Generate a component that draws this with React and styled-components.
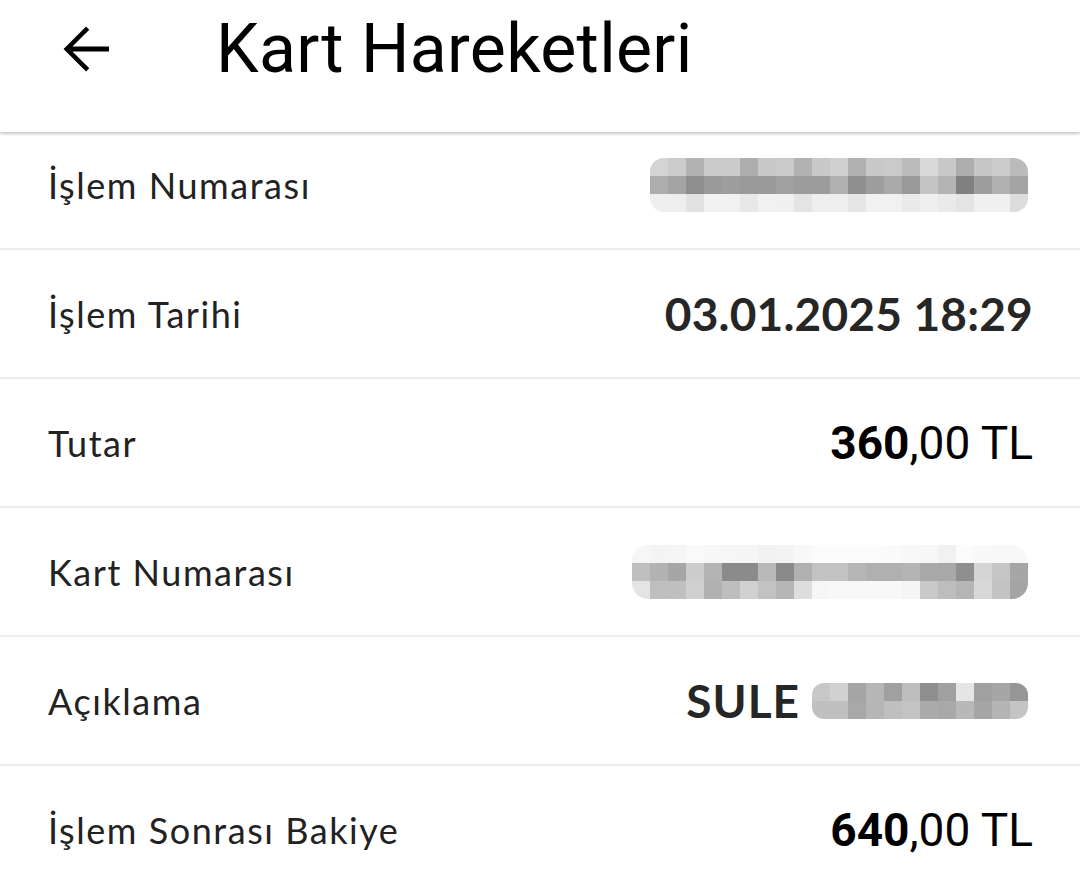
import styled, { createGlobalStyle } from "styled-components";

const GlobalStyle = createGlobalStyle`
  html, body {
    margin: 0;
    padding: 0;
    background: #ffffff;
  }
  body {
    font-family: Lato, "Noto Sans", sans-serif;
    color: #222222;
    overflow: hidden;
  }
`;

const Page = styled.div`
  width: 1080px;
  height: 891px;
  background: #ffffff;
  overflow: hidden;
`;

// üst bar
const Header = styled.header`
  position: sticky;
  top: 0;
  z-index: 2;
  height: 132px;
  display: flex;
  align-items: center;
  background: #ffffff;
  box-shadow: 0 2px 3px rgba(0, 0, 0, 0.22);
  padding-bottom: 34px;
  box-sizing: border-box;
`;

const BackButton = styled.button`
  width: 72px;
  height: 72px;
  margin-left: 49px;
  padding: 0;
  border: 0;
  background: transparent;
  display: flex;
  align-items: center;
  justify-content: center;
  cursor: pointer;
`;

const Title = styled.h1`
  margin: 0 0 0 95px;
  font-family: Roboto, "Noto Sans", sans-serif;
  font-weight: 400;
  font-size: 68px;
  letter-spacing: 0.3px;
  color: #000000;
  line-height: 1;
`;

// detay listesi
const List = styled.div`
  margin-top: -11px;
`;

const Row = styled.div`
  height: 127px;
  border-bottom: 2px solid #ededed;
  display: flex;
  align-items: center;
  justify-content: space-between;
  padding: 0 47px 0 48px;
`;

const Label = styled.span`
  font-family: Lato, "Noto Sans", sans-serif;
  font-size: 36px;
  font-weight: 400;
  color: #222222;
  letter-spacing: 1.55px;
`;

const DateValue = styled.span`
  font-family: Lato, "Noto Sans", sans-serif;
  font-size: 46px;
  font-weight: 700;
  color: #262626;
  letter-spacing: 0.2px;
`;

const Amount = styled.span`
  font-family: Roboto, "Noto Sans", sans-serif;
  font-size: 46px;
  color: #000000;
  font-weight: 400;

  b {
    font-weight: 700;
  }
`;

const Masked = styled.span`
  display: flex;
  align-items: center;
  gap: 12px;
`;

const MaskedText = styled.span`
  font-family: Lato, "Noto Sans", sans-serif;
  font-size: 46px;
  font-weight: 700;
  letter-spacing: 1px;
  color: #262626;
`;

// bulanık (pikselli) alan
const Pixels = styled.div`
  display: grid;
  grid-template-columns: repeat(${(p) => p.$cols}, 18px);
  grid-auto-rows: 18px;
  border-radius: ${(p) => p.$radius || "10px"};
  overflow: hidden;
  margin-right: ${(p) => p.$shift || "0px"};
`;

const Cell = styled.div`
  background: ${(p) => p.$c};
`;

function Pixelated({ rows, radius, shift }) {
  const grid = rows.map((r) => r.trim().split(/\s+/));
  return (
    <Pixels $cols={grid[0].length} $radius={radius} $shift={shift}>
      {grid.flat().map((c, i) => (
        <Cell key={i} $c={`#${c}${c}${c}`} />
      ))}
    </Pixels>
  );
}

function BackArrow() {
  return (
    <svg width="72" height="72" viewBox="0 0 24 24" aria-hidden="true">
      <path
        d="M20 11.15H7.83l5.59-5.59L12.35 4.5 4.85 12l7.5 7.5 1.07-1.06-5.59-5.59H20v-1.7z"
        fill="#000"
      />
    </svg>
  );
}

const ISLEM_NO = [
  "d4 cc b3 ca ca ad c8 ca b2 c8 d0 b0 c8 ca bb d9 c8 ad c6 cc bb",
  "ad a4 8e 9a 9e 9a 9a a0 9c 9c b1 8f 9e aa 9a c4 b4 80 9e b0 a4",
  "ef ee e2 f2 f1 e8 f1 f0 e4 ee ee e6 f1 f1 ea ef ea e4 f0 f0 dc",
];

const KART_NO = [
  "f6 f4 f5 fa f7 f6 f5 f2 f3 f8 fb fb fb fb fa f8 f7 f1 fb f9 f8 f8",
  "bf b3 a6 cc b4 8b 8b b9 8a b0 c2 c2 b6 b0 b0 b4 a8 a8 8f d4 c6 a6",
  "e4 bf c0 d0 b1 be d1 c2 b6 dd f6 f8 f8 f8 f8 f5 c9 bd b5 d8 c3 a4",
];

const SOYAD = [
  "c8 d1 a5 b6 a0 bd 8e a0 e5 a0 a6 96",
  "c0 c0 a8 b6 bf c4 ab a8 b8 a6 b4 c4",
];

export default function App() {
  return (
    <Page>
      <GlobalStyle />
      <Header>
        <BackButton aria-label="Geri">
          <BackArrow />
        </BackButton>
        <Title>Kart Hareketleri</Title>
      </Header>

      <List>
        <Row>
          <Label>İşlem Numarası</Label>
          <Pixelated rows={ISLEM_NO} radius="14px" shift="5px" />
        </Row>
        <Row>
          <Label>İşlem Tarihi</Label>
          <DateValue>03.01.2025 18:29</DateValue>
        </Row>
        <Row>
          <Label>Tutar</Label>
          <Amount>
            <b>360</b>,00 TL
          </Amount>
        </Row>
        <Row>
          <Label>Kart Numarası</Label>
          <Pixelated rows={KART_NO} radius="16px" shift="5px" />
        </Row>
        <Row>
          <Label>Açıklama</Label>
          <Masked>
            <MaskedText>SULE</MaskedText>
            <Pixelated rows={SOYAD} radius="12px" shift="5px" />
          </Masked>
        </Row>
        <Row>
          <Label>İşlem Sonrası Bakiye</Label>
          <Amount>
            <b>640</b>,00 TL
          </Amount>
        </Row>
      </List>
    </Page>
  );
}
